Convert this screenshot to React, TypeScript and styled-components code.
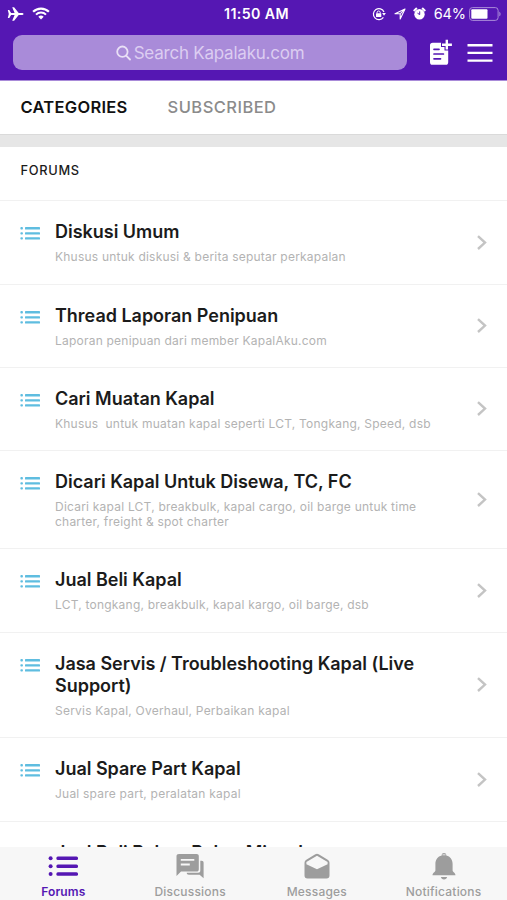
import React from 'react';
import styled, { createGlobalStyle } from 'styled-components';

const GlobalStyle = createGlobalStyle`
  *, *::before, *::after { box-sizing: border-box; }
  body { margin: 0; background: #fff; font-family: Inter, "Liberation Sans", sans-serif; }
  button { font: inherit; border: 0; padding: 0; background: none; color: inherit; }
  svg { display: block; }
`;

const Screen = styled.div`
  width: 507px;
  height: 900px;
  overflow: hidden;
  display: flex;
  flex-direction: column;
  background: #fff;
`;

const Header = styled.header`
  height: 81px;
  flex: none;
  background: #5517b3;
  border-bottom: 1px solid #a98bd9;
  color: #fff;
`;

const StatusBar = styled.div`
  height: 27px;
  display: grid;
  grid-template-columns: 1fr auto 1fr;
  align-items: center;
  padding: 0 6px 0 7px;
`;

const StatusGroup = styled.div<{ $end?: boolean }>`
  display: flex;
  align-items: center;
  justify-content: ${p => (p.$end ? 'flex-end' : 'flex-start')};
  gap: 7.5px;
`;

const Clock = styled.span`
  font-size: 14.2px;
  font-weight: 600;
  letter-spacing: 0.4px;
  line-height: 27px;
  padding-left: 5px;
`;

const Percent = styled.span`
  font-size: 14.5px;
  letter-spacing: -0.1px;
  line-height: 27px;
  margin-right: -4.5px;
`;

const SearchRow = styled.div`
  display: flex;
  align-items: center;
  padding: 8px 0 0 13px;
`;

const SearchField = styled.div`
  width: 394px;
  flex: none;
  height: 35px;
  border-radius: 9px;
  background: #a98bd9;
  color: #dccdf1;
  display: flex;
  align-items: center;
  justify-content: center;
  gap: 3px;
  font-size: 17px;
  letter-spacing: -0.23px;
`;

const ComposeButton = styled.button`
  margin-left: 22px;
`;

const MenuButton = styled.button`
  margin-left: 13.5px;
`;

const Tabs = styled.nav`
  height: 53px;
  flex: none;
  display: flex;
  gap: 40px;
  padding-left: 20.5px;
`;

const Tab = styled.button<{ $active?: boolean }>`
  height: 51px;
  font-size: 16.5px;
  font-weight: ${p => (p.$active ? 600 : 500)};
  letter-spacing: ${p => (p.$active ? '0.28px' : '0.45px')};
  color: ${p => (p.$active ? '#111' : '#8b8b8b')};
`;

const Divider = styled.div`
  height: 13px;
  flex: none;
  background: #e6e6e6;
  border-top: 1px solid #dadada;
`;

const SectionTitle = styled.h2`
  margin: 0;
  height: 53px;
  flex: none;
  padding-left: 20.5px;
  font-size: 12.8px;
  font-weight: 500;
  letter-spacing: 0.7px;
  line-height: 47px;
  color: #1b1b1b;
`;

const ForumList = styled.main`
  flex: 1;
  min-height: 0;
  overflow: hidden;
`;

const ForumRow = styled.article<{ $height: number }>`
  height: ${p => p.$height}px;
  border-top: 1px solid #f1f1f1;
  display: flex;
  padding: 19px 19px 0 20px;
`;

const RowIcon = styled.div`
  width: 35px;
  flex: none;
  padding-top: 7px;
`;

const RowText = styled.div`
  flex: 1;
`;

const ForumName = styled.h3`
  margin: 0;
  padding-top: 1px;
  font-size: 18px;
  font-weight: 600;
  line-height: 22px;
  letter-spacing: -0.02px;
  color: #1b1b1b;
  white-space: pre-line;
`;

const ForumNote = styled.p`
  margin: 6px 0 0;
  font-size: 12px;
  line-height: 15px;
  letter-spacing: 0.22px;
  color: #b3b3b3;
  white-space: pre;
`;

const Chevron = styled.div`
  flex: none;
  width: 12px;
  display: flex;
  align-items: center;
  padding-bottom: 19px;
`;

const TabBar = styled.footer`
  height: 53px;
  flex: none;
  display: grid;
  grid-template-columns: repeat(4, 1fr);
  background: #f7f7f7;
`;

const BarItem = styled.button<{ $active?: boolean }>`
  display: flex;
  flex-direction: column;
  align-items: center;
  padding-top: 3px;
  color: ${p => (p.$active ? '#5517b3' : '#9d9d9d')};
`;

const BarLabel = styled.span<{ $active?: boolean }>`
  margin-top: 2px;
  font-size: 12px;
  font-weight: ${p => (p.$active ? 600 : 500)};
  letter-spacing: ${p => (p.$active ? 0.12 : 0.2)}px;
  line-height: 16px;
`;

const ListGlyph = ({ color = '#5fbde0' }: { color?: string }) => (
  <svg width="20" height="14" viewBox="0 0 20 14" fill={color}>
    {[1.3, 6.4, 11.4].map(y => (
      <g key={y}>
        <rect x="0.4" y={y - 1.2} width="2.5" height="2.4" rx="0.8" />
        <rect x="5" y={y - 1.2} width="15" height="2.4" rx="0.6" />
      </g>
    ))}
  </svg>
);

const Airplane = () => (
  <svg width="17" height="14" viewBox="0 0 17 14" fill="#fff">
    <path d="M.8 3h1.5l1.8 2.9h3.5L5.2.2h1.9l4.6 5.7h3.4c1.9 0 1.9 2.2 0 2.2h-3.4l-4.6 5.7H5.2l2.4-5.7H4.1L2.3 11H.8l1-4z" />
  </svg>
);

const Wifi = () => (
  <svg width="18" height="13" viewBox="0 0 18 13" fill="none" stroke="#fff">
    <path d="M1.1 4.8a11.2 11.2 0 0 1 15.8 0" strokeWidth="2.2" />
    <path d="M4 7.6a7.1 7.1 0 0 1 10 0" strokeWidth="2" />
    <path d="M6.3 9.8a3.9 3.9 0 0 1 5.4 0L9 12.6z" fill="#fff" stroke="none" />
  </svg>
);

const RotationLock = () => (
  <svg width="14" height="14" viewBox="0 0 14 14" fill="none" stroke="#fff" strokeWidth="1.2">
    <path d="M11.4 10.3A5.5 5.5 0 1 1 12 5" />
    <path d="M10.1 6h3.8L12 8.7z" fill="#fff" stroke="none" />
    <rect x="4" y="6.2" width="5.3" height="3.8" rx=".5" fill="#fff" stroke="none" />
    <path d="M5.1 6.4V5.2a1.6 1.6 0 0 1 3.1 0v1.2" strokeWidth="1" />
  </svg>
);

const Location = () => (
  <svg width="12" height="12" viewBox="0 0 12 12" fill="none" stroke="#fff" strokeWidth="1.1" strokeLinejoin="round">
    <path d="M11 1 1 5.7h5.2v5.2z" />
    <path d="M10.6 1.4 6.4 5.6" />
  </svg>
);

const Alarm = () => (
  <svg width="13" height="13" viewBox="0 0 13 13" fill="#fff">
    <circle cx="6.5" cy="7.2" r="5.2" />
    <path d="m1.3 3.4 2-1.8M11.7 3.4l-2-1.8" stroke="#fff" strokeWidth="2" strokeLinecap="round" />
    <path d="M6.7 4.4v3.2L4.5 6.2" fill="none" stroke="#5517b3" strokeWidth="1" />
  </svg>
);

const Battery = () => (
  <svg width="32" height="14" viewBox="0 0 32 14">
    <rect x=".6" y=".6" width="28.5" height="12.8" rx="2.8" fill="none" stroke="#a98bd9" />
    <rect x="2.3" y="2.3" width="16.2" height="9.4" rx=".9" fill="#fff" />
    <path d="M30.3 4.7c1.7.6 1.7 4 0 4.6z" fill="#a98bd9" />
  </svg>
);

const SearchIcon = () => (
  <svg width="15" height="16" viewBox="0 0 15 16" fill="none" stroke="#e9e0f6" strokeWidth="1.8" strokeLinecap="round">
    <circle cx="6.4" cy="6.7" r="5.2" />
    <path d="m10.4 10.8 3.6 3.7" />
  </svg>
);

const Compose = () => (
  <svg width="24" height="27" viewBox="0 0 24 27">
    <path d="M3.8 3.7h8.4l7 6.5v13c0 1.7-.8 2.6-2.5 2.6H3.5C1.8 25.8 1 24.9 1 23.2V6.3c0-1.7.9-2.6 2.8-2.6z" fill="#fff" />
    <path d="M5 10.3h5M5 15h9.4M5 19.8h6.5" stroke="#5517b3" strokeWidth="1.7" fill="none" strokeLinecap="round" />
    <path d="M17.8.6v10.8M12 5.7h11" stroke="#5517b3" strokeWidth="4.6" />
    <path d="M17.8.8v9.6M13 5.7h9.9" stroke="#fff" strokeWidth="2.4" />
  </svg>
);

const Menu = () => (
  <svg width="27" height="20" viewBox="0 0 27 20" stroke="#fff" strokeWidth="2.4">
    <path d="M.5 2.2h25M.5 9.9h25M.5 17.6h25" />
  </svg>
);

const ForumsIcon = () => (
  <svg width="30" height="32" viewBox="0 0 30 32" fill="currentColor">
    {[7.8, 15.7, 23.5].map(y => (
      <g key={y}>
        <circle cx="2.6" cy={y + 0.5} r="2" />
        <rect x="8.4" y={y - 1.2} width="21.6" height="3.4" rx="1.5" />
      </g>
    ))}
  </svg>
);

const DiscussionsIcon = () => (
  <svg width="30" height="32" viewBox="0 0 30 32">
    <path d="M4 4h17.5c1.5 0 2.3.9 2.3 2.3v13c0 1.4-.8 2.3-2.3 2.3H6l-4.5 4.3V6.3C1.5 4.9 2.4 4 4 4z" fill="currentColor" />
    <path d="M5.8 9.9h13.5M5.8 14.5h9" stroke="#f7f7f7" strokeWidth="1.9" />
    <path d="M25.3 10.7h1.3c1.3 0 2 .7 2 2v15.5l-4-3.5H14c-1.6 0-2.3-.7-2.3-2h11.4c1.5 0 2.2-.7 2.2-2.2z" fill="currentColor" />
  </svg>
);

const MessagesIcon = () => (
  <svg width="26" height="32" viewBox="0 0 26 32" fill="currentColor">
    <path fillRule="evenodd" d="M11.3 4.3Q13 3.3 14.7 4.3l9 5.4q1.8 1.1 1.8 3v12.8q0 3-3 3h-19q-3 0-3-3V12.700q0-1.900 1.800-3zM13 5.700 2.400 12v2.200L13 19.200l10.600-5v-2.200z" />
  </svg>
);

const BellIcon = () => (
  <svg width="24" height="32" viewBox="0 0 24 32" fill="currentColor">
    <path d="M12 3c1.4 0 2.3.9 2.3 2.2v.3c4 .9 6.3 4.3 6.3 8.5v6.3c0 2 2.900 2.500 2.900 5H.5c0-2.500 2.900-3 2.900-5V14c0-4.200 2.300-7.600 6.300-8.500v-.3C9.700 3.900 10.600 3 12 3z" />
    <path d="M10.4 4.8h3.2" stroke="#f7f7f7" strokeWidth=".8" />
    <path d="M8.9 27h6.2c-.3 1.6-1.4 2.5-3.1 2.5S9.2 28.6 8.9 27z" />
  </svg>
);

interface Forum {
  name: string;
  note: string;
  height: number;
}

const forums: Forum[] = [
  { name: 'Diskusi Umum', note: 'Khusus untuk diskusi & berita seputar perkapalan', height: 84 },
  { name: 'Thread Laporan Penipuan', note: 'Laporan penipuan dari member KapalAku.com', height: 83 },
  { name: 'Cari Muatan Kapal', note: 'Khusus  untuk muatan kapal seperti LCT, Tongkang, Speed, dsb', height: 83 },
  {
    name: 'Dicari Kapal Untuk Disewa, TC, FC',
    note: 'Dicari kapal LCT, breakbulk, kapal cargo, oil barge untuk time\ncharter, freight & spot charter',
    height: 98,
  },
  { name: 'Jual Beli Kapal', note: 'LCT, tongkang, breakbulk, kapal kargo, oil barge, dsb', height: 84 },
  { name: 'Jasa Servis / Troubleshooting Kapal (Live\nSupport)', note: 'Servis Kapal, Overhaul, Perbaikan kapal', height: 105 },
  { name: 'Jual Spare Part Kapal', note: 'Jual spare part, peralatan kapal', height: 84 },
  { name: 'Jual Beli Bahan Bakar Minyak', note: '', height: 84 },
];

const barItems = [
  { label: 'Forums', icon: <ForumsIcon />, active: true },
  { label: 'Discussions', icon: <DiscussionsIcon /> },
  { label: 'Messages', icon: <MessagesIcon /> },
  { label: 'Notifications', icon: <BellIcon /> },
];

export default function App() {
  return (
    <Screen>
      <GlobalStyle />
      <Header>
        <StatusBar>
          <StatusGroup>
            <Airplane />
            <Wifi />
          </StatusGroup>
          <Clock>11:50 AM</Clock>
          <StatusGroup $end>
            <RotationLock />
            <Location />
            <Alarm />
            <Percent>64%</Percent>
            <Battery />
          </StatusGroup>
        </StatusBar>
        <SearchRow>
          <SearchField>
            <SearchIcon />
            <span>Search Kapalaku.com</span>
          </SearchField>
          <ComposeButton aria-label="New post"><Compose /></ComposeButton>
          <MenuButton aria-label="Menu"><Menu /></MenuButton>
        </SearchRow>
      </Header>
      <Tabs>
        <Tab $active>CATEGORIES</Tab>
        <Tab>SUBSCRIBED</Tab>
      </Tabs>
      <Divider />
      <SectionTitle>FORUMS</SectionTitle>
      <ForumList>
        {forums.map(forum => (
          <ForumRow key={forum.name} $height={forum.height}>
            <RowIcon><ListGlyph /></RowIcon>
            <RowText>
              <ForumName>{forum.name}</ForumName>
              <ForumNote>{forum.note}</ForumNote>
            </RowText>
            <Chevron>
              <svg width="12" height="16" viewBox="0 0 12 16" fill="none" stroke="#c4c4c4" strokeWidth="2.4">
                <path d="m2 1.2 7 6.4-7 6.4" />
              </svg>
            </Chevron>
          </ForumRow>
        ))}
      </ForumList>
      <TabBar>
        {barItems.map(item => (
          <BarItem key={item.label} $active={item.active}>
            {item.icon}
            <BarLabel $active={item.active}>{item.label}</BarLabel>
          </BarItem>
        ))}
      </TabBar>
    </Screen>
  );
}
